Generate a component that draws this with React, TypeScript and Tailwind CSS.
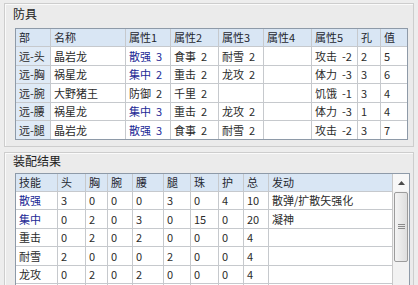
import React from 'react'

const FONT = "font-['Noto_Sans_CJK_SC','Noto_Sans',sans-serif]"

type Cell = { text: string; blue?: boolean }

const armorHead = ['部', '名称', '属性1', '属性2', '属性3', '属性4', '属性5', '孔', '值']

const armorRows: Cell[][] = [
    [{ text: '远-头' }, { text: '晶岩龙' }, { text: '散强 3', blue: true }, { text: '食事 2' }, { text: '耐雪 2' }, { text: '' }, { text: '攻击 -2' }, { text: '2' }, { text: '5' }],
    [{ text: '远-胸' }, { text: '祸星龙' }, { text: '集中 2', blue: true }, { text: '重击 2' }, { text: '龙攻 2' }, { text: '' }, { text: '体力 -3' }, { text: '3' }, { text: '6' }],
    [{ text: '远-腕' }, { text: '大野猪王' }, { text: '防御 2' }, { text: '千里 2' }, { text: '' }, { text: '' }, { text: '饥饿 -1' }, { text: '3' }, { text: '4' }],
    [{ text: '远-腰' }, { text: '祸星龙' }, { text: '集中 3', blue: true }, { text: '重击 2' }, { text: '龙攻 2' }, { text: '' }, { text: '体力 -3' }, { text: '1' }, { text: '4' }],
    [{ text: '远-腿' }, { text: '晶岩龙' }, { text: '散强 3', blue: true }, { text: '食事 2' }, { text: '耐雪 2' }, { text: '' }, { text: '攻击 -2' }, { text: '3' }, { text: '7' }],
]

const resultHead = ['技能', '头', '胸', '腕', '腰', '腿', '珠', '护', '总', '发动']

const resultRows: Cell[][] = [
    [{ text: '散强', blue: true }, ...['3', '0', '0', '0', '3', '0', '4', '10', '散弹/扩散矢强化'].map((t) => ({ text: t }))],
    [{ text: '集中', blue: true }, ...['0', '2', '0', '3', '0', '15', '0', '20', '凝神'].map((t) => ({ text: t }))],
    [{ text: '重击' }, ...['0', '2', '0', '2', '0', '0', '0', '4', ''].map((t) => ({ text: t }))],
    [{ text: '耐雪' }, ...['2', '0', '0', '0', '2', '0', '0', '4', ''].map((t) => ({ text: t }))],
    [{ text: '龙攻' }, ...['0', '2', '0', '2', '0', '0', '0', '4', ''].map((t) => ({ text: t }))],
    ['', '', '', '', '', '', '', '', '', ''].map((t) => ({ text: t })),
    ['', '', '', '', '', '', '', '', '', ''].map((t) => ({ text: t })),
]

const HeadCell = ({ text }: { text: string }) => (
    <div className="flex items-center bg-[#d9e6f4] pl-[3px] text-[#1f2630]">{text}</div>
)

const BodyCell = ({ cell, tint }: { cell: Cell; tint?: boolean }) => {
    const [name, value] = cell.text.split(' ')
    return (
        <div
            className={`flex items-center gap-[5px] whitespace-nowrap pl-[3px] ${tint ? 'bg-[#dfeaf6]' : 'bg-white'} ${cell.blue ? 'text-[#1c2a96]' : 'text-[#2b2b2b]'}`}
        >
            <span>{name}</span>
            {value && <span>{value}</span>}
        </div>
    )
}

const Scrollbar = () => (
    <div className="flex w-[17px] flex-col border-l border-[#c8c8c8] bg-[#f2f2f2]">
        <div className="flex h-[17px] items-center justify-center bg-[#f7f7f7]">
            <svg width="7" height="4" viewBox="0 0 7 4">
                <path d="M0 4 L3.5 0 L7 4 Z" fill="#4a4a4a" />
            </svg>
        </div>
        <div className="mx-[1px] mt-[1px] flex h-[70px] items-center justify-center rounded-[2px] border border-[#9c9c9c] bg-gradient-to-r from-[#f4f4f4] to-[#dedede]">
            <svg width="7" height="6" viewBox="0 0 7 6">
                <path d="M0 0.5 H7 M0 2.5 H7 M0 4.5 H7" stroke="#8a8a8a" strokeWidth="1" />
            </svg>
        </div>
    </div>
)

export default function App() {
    return (
        <div className={`h-[285px] w-[418px] overflow-hidden bg-[#ededed] px-[4px] pt-[3px] text-[11px] leading-none ${FONT}`}>
            {/* 防具 */}
            <div className="h-[144px] border border-[#cdcdcd] bg-[#ebebeb] pl-[10px] pt-[2px] shadow-[inset_1px_1px_0_#fafafa]">
                <div className="flex h-[16px] items-center text-[12px] text-[#222]">
                    <span className="-ml-[2px]">防具</span>
                </div>
                <div className="mt-[6px] w-[393px] border border-[#8e9aa8] bg-[#c6c9cd]">
                    <div className="grid grid-cols-[34px_74px_44px_47px_44px_47px_45px_22px_26px] grid-rows-[17px_18px_17px_18px_17px_18px] gap-px">
                        {armorHead.map((h) => (
                            <HeadCell key={h} text={h} />
                        ))}
                        {armorRows.map((row, r) =>
                            row.map((c, i) => <BodyCell key={`${r}-${i}`} cell={c} tint={i === 0} />)
                        )}
                    </div>
                </div>
            </div>

            {/* 装配结果 */}
            <div className="mt-[5px] h-[200px] border border-[#cdcdcd] bg-[#ebebeb] pl-[10px] shadow-[inset_1px_1px_0_#fafafa]">
                <div className="flex h-[16px] items-center text-[12px] text-[#222]">
                    <span className="-ml-[2px]">装配结果</span>
                </div>
                <div className="mt-[4px] flex w-[395px] border border-[#8e9aa8] bg-white">
                    <div className="w-[376px] bg-[#c6c9cd]">
                        <div className="grid grid-cols-[41px_27px_21px_24px_30px_26px_27px_24px_24px_123px] grid-rows-[17px_17px_18px_17px_18px_17px_18px_17px] gap-px">
                            {resultHead.map((h) => (
                                <HeadCell key={h} text={h} />
                            ))}
                            {resultRows.map((row, r) =>
                                row.map((c, i) => <BodyCell key={`${r}-${i}`} cell={c} />)
                            )}
                        </div>
                    </div>
                    <Scrollbar />
                </div>
            </div>
        </div>
    )
}
